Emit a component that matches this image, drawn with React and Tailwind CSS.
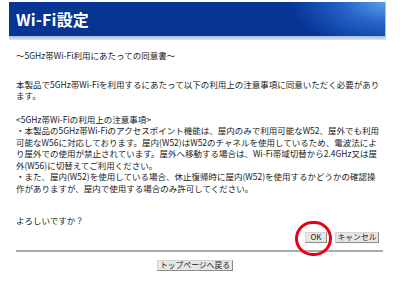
import React from 'react';

const jp = { fontFamily: '"Noto Sans CJK JP", "Noto Sans", sans-serif' };

function Btn({ children, className = '' }) {
    return (
        <button
            className={`h-[11px] px-[1px] flex items-center justify-center whitespace-nowrap bg-[#e6e6e6] border border-[#8c8c8c] border-t-[#d4d4d4] border-l-[#d4d4d4] text-[7.8px] leading-none text-[#222] ${className}`}
        >
            {children}
        </button>
    );
}

export default function App() {
    return (
        <div className="w-[400px] h-[282px] bg-white overflow-hidden" style={jp}>
            <div className="ml-[9px] pt-[2px] w-[377px]">
                {/* Header */}
                <div className="h-[34px] flex items-center pl-[7px] border-r border-[#9ec3ee] bg-[radial-gradient(95px_48px_at_100%_0%,#5c9de8_0%,#2562c8_45%,#063594_100%)] bg-[#063594]">
                    <h1 className="text-white text-[16px] font-bold leading-none tracking-[0.2px]">Wi-Fi設定</h1>
                </div>
                <div className="h-[4px] bg-[linear-gradient(#a4bcd6,#dce6f1)]" />

                {/* Body */}
                <div className="pl-[7px] pr-[3px] text-[8.5px] leading-[11.5px] text-[#222] whitespace-nowrap">
                    <p className="mt-[10px]">〜5GHz帯Wi-Fi利用にあたっての同意書〜</p>
                    <p className="mt-[17px]">
                        本製品で5GHz帯Wi-Fiを利用するにあたって以下の利用上の注意事項に同意いただく必要があり
                        <br />
                        ます。
                    </p>
                    <div className="mt-[12px]">
                        <p>&lt;5GHz帯Wi-Fiの利用上の注意事項&gt;</p>
                        <p>
                            ・本製品の5GHz帯Wi-Fiのアクセスポイント機能は、屋内のみで利用可能なW52、屋外でも利用
                            <br />
                            可能なW56に対応しております。屋内(W52)はW52のチャネルを使用しているため、電波法によ
                            <br />
                            り屋外での使用が禁止されています。屋外へ移動する場合は、Wi-Fi帯域切替から2.4GHz又は屋
                            <br />
                            外(W56)に切替えてご利用ください。
                        </p>
                        <p>
                            ・また、屋内(W52)を使用している場合、休止復帰時に屋内(W52)を使用するかどうかの確認操
                            <br />
                            作がありますが、屋内で使用する場合のみ許可してください。
                        </p>
                    </div>
                    <p className="mt-[21px]">よろしいですか？</p>

                    <div className="mt-[5px] flex justify-end gap-[8px] pr-[4px]">
                        <div className="relative">
                            <Btn className="w-[22px]">OK</Btn>
                            <div className="absolute left-[-10px] top-[-11px] w-[37px] h-[35px] rounded-full border-[3px] border-[#e60012]" />
                        </div>
                        <Btn className="w-[44px]">キャンセル</Btn>
                    </div>

                    <div className="mt-[7px] h-[2px] bg-[#a9a9a9]" />
                </div>

                <div className="mt-[8px] flex justify-center pr-[5px]">
                    <Btn className="w-[76px]">トップページへ戻る</Btn>
                </div>
            </div>
        </div>
    );
}
